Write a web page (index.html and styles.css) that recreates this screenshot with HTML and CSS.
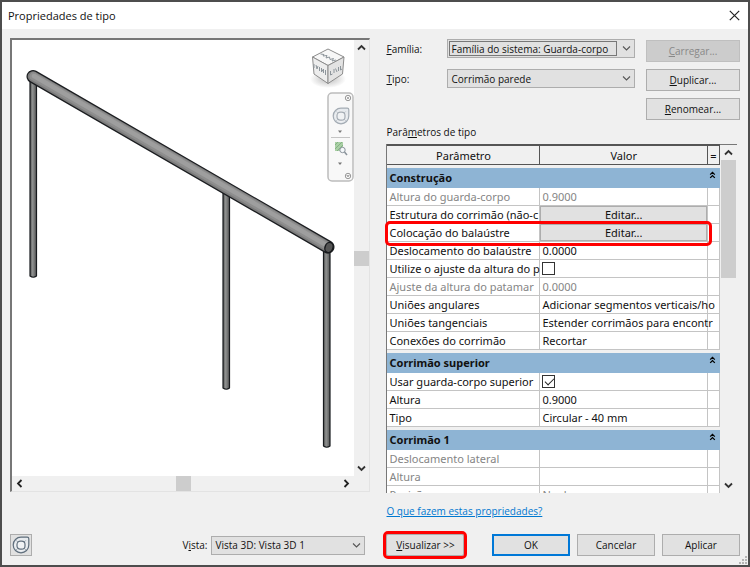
FILE: index.html
```html
<!DOCTYPE html>
<html lang="pt-BR">
<head>
    <meta charset="UTF-8">
    <meta name="viewport" content="width=device-width, initial-scale=1.0">
    <title>Propriedades de tipo</title>
    <link rel="stylesheet" href="styles.css">
</head>
<body>
    <!-- Shared icons -->
    <svg class="defs" width="0" height="0" aria-hidden="true">
        <symbol id="up" viewBox="0 0 9 9"><path d="M1 6.5 4.5 3 8 6.5" fill="none" stroke="#333" stroke-width="1.8"/></symbol>
        <symbol id="down" viewBox="0 0 9 9"><path d="M1 2.5 4.5 6 8 2.5" fill="none" stroke="#333" stroke-width="1.8"/></symbol>
        <symbol id="left" viewBox="0 0 9 9"><path d="M6.5 1 3 4.5 6.5 8" fill="none" stroke="#222" stroke-width="1.8"/></symbol>
        <symbol id="right" viewBox="0 0 9 9"><path d="M2.5 1 6 4.5 2.5 8" fill="none" stroke="#222" stroke-width="1.8"/></symbol>
        <symbol id="caret" viewBox="0 0 9 9"><path d="M1 2.5 4.5 6 8 2.5" fill="none" stroke="#555" stroke-width="1.1"/></symbol>
        <symbol id="collapse" viewBox="0 0 7 8"><path d="M1.2 3.6 3.5 1.3 5.8 3.6M1.2 6.9 3.5 4.6 5.8 6.9" fill="none" stroke="#000" stroke-width="1.3"/></symbol>
        <symbol id="wheel" viewBox="0 0 18 18">
            <path d="M9 1.2H15.2Q16.8 1.2 16.8 2.8V9A7.8 7.8 0 1 1 9 1.2Z" fill="#e6eaee" stroke="currentColor" stroke-width="1.2"/>
            <circle cx="9" cy="9.200" r="5.600" fill="#f2f3f4"/>
            <rect x="5" y="5.200" width="8" height="8" rx="3.200" fill="#f0f2f4" stroke="currentColor" stroke-width="1.2"/>
            <path d="M4.200 14 5.800 12.400M13.800 14 12.200 12.400M4.200 4.400 5.800 6M13.800 4.400 12.200 6" stroke="currentColor" stroke-width=".6"/>
        </symbol>
    </svg>

    <div class="dialog">
        <header class="titlebar">
            <h1>Propriedades de tipo</h1>
            <button class="close" aria-label="Fechar">
                <svg width="11" height="11" viewBox="0 0 11 11"><path d="M.8.8 10.2 10.2M10.2.8.8 10.2" stroke="#222" stroke-width="1.2"/></svg>
            </button>
        </header>

        <main class="content">
            <!-- 3D preview -->
            <section class="preview">
                <div class="canvas">
                    <svg class="model" viewBox="12 40 343 436" preserveAspectRatio="xMinYMin slice">
                        <defs>
                            <linearGradient id="post">
                                <stop offset="0" stop-color="#555"/>
                                <stop offset=".4" stop-color="#909291"/>
                                <stop offset="1" stop-color="#555"/>
                            </linearGradient>
                            <radialGradient id="shadow">
                                <stop offset="0" stop-color="#bbb"/>
                                <stop offset="1" stop-color="#fff"/>
                            </radialGradient>
                        </defs>
                        <g fill="url(#post)" stroke="#171a1d" stroke-width="1.2">
                            <path d="M30 80V276Q33.300 278.500 36.500 276V80Z"/>
                            <path d="M223 190V388Q226.300 390.500 229.500 388V190Z"/>
                            <path d="M323.500 248V446Q326.800 448.500 330 446V248Z"/>
                        </g>
                        <g stroke-linecap="round">
                            <path d="M33 76.500 328 247" stroke="#1b1d20" stroke-width="13"/>
                            <path d="M33 76.500 328 247" stroke="#7b7b7b" stroke-width="10.600"/>
                            <path d="M33.500 76.300 328 246.500" stroke="#8e8e8e" stroke-width="8"/>
                            <path d="M34 76 327 245.500" stroke="#9e9e9e" stroke-width="4.500"/>
                        </g>
                        <ellipse cx="329" cy="247.500" rx="4" ry="5.200" transform="rotate(20 329 247.500)" fill="#555" stroke="#17191c" stroke-width="1.500"/>
                        <!-- View cube -->
                        <ellipse cx="328" cy="79" rx="18" ry="9" fill="url(#shadow)"/>
                        <g stroke="#8c8c8c" stroke-width="1" stroke-linejoin="round">
                            <path d="M328 49 344 57 328 65.500 312.500 57Z" fill="#f7f7f7"/>
                            <path d="M312.500 57 328 65.500V83.500L314 74Z" fill="#ededed"/>
                            <path d="M344 57 328 65.500V83.500L342.500 74Z" fill="#e3e3e3"/>
                        </g>
                        <g fill="none" stroke="#8d959b" stroke-width="1">
                            <path d="M320.500 54 324 54.500 323 56 327 55.500 326 58 329.500 57 330 59.500 333.500 58.500 332 61 336 60"/>
                            <path d="M314 64V68M316 65 317 69 318 66M319.500 67V71M321.500 68V72L323.500 69V73M325.500 70V75"/>
                            <path d="M330.500 71V75L332.500 74M334 69V73M335.500 68.500 337 72M338.500 67V71M340.500 66V70L342 69"/>
                        </g>
                    </svg>
                    <div class="navbar">
                        <svg width="27" height="90" viewBox="0 0 27 90">
                            <rect x="1" y="1" width="25" height="88" rx="4" fill="#f8f8f8" stroke="#bcbcbc" stroke-width="1.500"/>
                            <g fill="none" stroke="#999">
                                <circle cx="21" cy="6" r="2.700"/><path d="M19.800 4.800 22.200 7.200M22.200 4.800 19.800 7.200" stroke-width=".8"/>
                                <circle cx="21" cy="84" r="2.700"/><path d="M19.800 83.500H22.200L21 85Z" stroke-width=".8"/>
                                <path d="M4 45.500H23" stroke="#c4c4c4"/>
                            </g>
                            <svg x="5" y="15" width="18" height="18" color="#a3abb3"><use href="#wheel"/></svg>
                            <path d="M11 38.500H15L13 41Z" fill="#777"/>
                            <path d="M11 70.500H15L13 73Z" fill="#777"/>
                            <rect x="8" y="50" width="8" height="9" fill="#a9cfa5"/>
                            <path d="M8 53 11 50M8 57 15 50M10 59 16 53" stroke="#7bab78" stroke-width=".8"/>
                            <circle cx="15.500" cy="58" r="2.700" fill="#f5f8fa" stroke="#8b949c"/>
                            <path d="M17.500 60 20 63" stroke="#8b949c" stroke-width="1.500"/>
                        </svg>
                    </div>
                </div>
                <div class="scroll scroll-v">
                    <button aria-label="Acima"><svg><use href="#up"/></svg></button>
                    <div class="track"><span class="thumb"></span></div>
                    <button aria-label="Abaixo"><svg><use href="#down"/></svg></button>
                </div>
                <div class="scroll scroll-h">
                    <button aria-label="Esquerda"><svg><use href="#left"/></svg></button>
                    <div class="track"><span class="thumb"></span></div>
                    <button aria-label="Direita"><svg><use href="#right"/></svg></button>
                </div>
            </section>

            <section class="properties">
                <div class="head">
                    <div class="fields">
                        <label for="familia"><u>F</u>amília:</label>
                        <span class="select focused">
                            <select id="familia"><option>Família do sistema: Guarda-corpo</option></select>
                            <svg><use href="#caret"/></svg>
                        </span>
                        <label for="tipo"><u>T</u>ipo:</label>
                        <span class="select">
                            <select id="tipo"><option>Corrimão parede</option></select>
                            <svg><use href="#caret"/></svg>
                        </span>
                    </div>
                    <div class="actions">
                        <button class="btn" disabled><u>C</u>arregar...</button>
                        <button class="btn"><u>D</u>uplicar...</button>
                        <button class="btn"><u>R</u>enomear...</button>
                    </div>
                </div>

                <h2>Parâ<u>m</u>etros de tipo</h2>

                <div class="grid">
                    <div class="grid-view">
                        <table>
                            <colgroup><col class="col-name"><col><col class="col-eq"></colgroup>
                            <thead>
                                <tr><th>Parâmetro</th><th>Valor</th><th>=</th></tr>
                            </thead>
                            <tbody>
                                <tr class="group"><th colspan="3"><div>Construção<svg><use href="#collapse"/></svg></div></th></tr>
                                <tr class="off"><td>Altura do guarda-corpo</td><td>0.9000</td><td></td></tr>
                                <tr><td>Estrutura do corrimão (não-c</td><td class="cell-btn"><button class="edit">Editar...</button></td><td></td></tr>
                                <tr class="marked"><td>Colocação do balaústre</td><td class="cell-btn"><button class="edit">Editar...</button></td><td></td></tr>
                                <tr><td>Deslocamento do balaústre</td><td>0.0000</td><td></td></tr>
                                <tr><td><label for="ajuste">Utilize o ajuste da altura do p</label></td><td><input type="checkbox" id="ajuste"></td><td></td></tr>
                                <tr class="off"><td>Ajuste da altura do patamar</td><td>0.0000</td><td></td></tr>
                                <tr><td>Uniões angulares</td><td>Adicionar segmentos verticais/ho</td><td></td></tr>
                                <tr><td>Uniões tangenciais</td><td>Estender corrimãos para encontr</td><td></td></tr>
                                <tr><td>Conexões do corrimão</td><td>Recortar</td><td></td></tr>
                                <tr class="group"><th colspan="3"><div>Corrimão superior<svg><use href="#collapse"/></svg></div></th></tr>
                                <tr><td><label for="superior">Usar guarda-corpo superior</label></td><td><input type="checkbox" id="superior" checked></td><td></td></tr>
                                <tr><td>Altura</td><td>0.9000</td><td></td></tr>
                                <tr><td>Tipo</td><td>Circular - 40 mm</td><td></td></tr>
                                <tr class="group"><th colspan="3"><div>Corrimão 1<svg><use href="#collapse"/></svg></div></th></tr>
                                <tr class="off"><td>Deslocamento lateral</td><td></td><td></td></tr>
                                <tr class="off"><td>Altura</td><td></td><td></td></tr>
                                <tr class="off"><td>Posição</td><td>Nenhum</td><td></td></tr>
                            </tbody>
                        </table>
                    </div>
                    <div class="scroll scroll-v grid-scroll">
                        <button aria-label="Acima"><svg><use href="#up"/></svg></button>
                        <div class="track"><span class="thumb"></span></div>
                        <button aria-label="Abaixo"><svg><use href="#down"/></svg></button>
                    </div>
                </div>

                <a class="help" href="#">O que fazem estas propriedades?</a>
            </section>
        </main>

        <footer class="footer">
            <div class="view">
                <button class="btn wheel-btn" aria-label="Roda de navegação"><svg><use href="#wheel"/></svg></button>
                <label for="vista">V<u>i</u>sta:</label>
                <span class="select">
                    <select id="vista"><option>Vista 3D: Vista 3D 1</option></select>
                    <svg><use href="#caret"/></svg>
                </span>
            </div>
            <div class="buttons">
                <button class="btn preview-btn"><u>V</u>isualizar &gt;&gt;</button>
                <button class="btn default">OK</button>
                <button class="btn">Cancelar</button>
                <button class="btn">Aplicar</button>
            </div>
        </footer>
        <svg class="grip" width="9" height="9" viewBox="0 0 9 9"><path d="M6 0h2v2H6zM3 3h2v2H3zM6 3h2v2H6zM0 6h2v2H0zM3 6h2v2H3zM6 6h2v2H6z" fill="#b5b5b5"/></svg>
    </div>
</body>
</html>
```
FILE: styles.css
```css
* {
    box-sizing: border-box;
}
body {
    margin: 0;
    font-family: "Open Sans", "Noto Sans", sans-serif;
    font-size: 10px;
    color: #111;
}
button, select, input {
    font: inherit;
    color: inherit;
    margin: 0;
}
.defs {
    position: absolute;
}
.dialog {
    position: relative;
    display: flex;
    flex-direction: column;
    height: 100vh;
    border: 2px solid #4d4d4d;
    background-color: #f0f0f0;
}

/* Title bar */
.titlebar {
    display: flex;
    align-items: center;
    justify-content: space-between;
    height: 27px;
    padding: 0 8px 0 6px;
    background-color: #fff;
}
.titlebar h1 {
    margin: 0;
    font-size: 11px;
    font-weight: normal;
}
.close {
    display: flex;
    padding: 0;
    border: 0;
    background: none;
}

.content {
    flex: 1;
    min-height: 0;
    display: grid;
    grid-template-columns: 361fr 354fr;
    gap: 16px;
    padding: 9px 8px 0;
}

/* Preview */
.preview {
    display: grid;
    grid-template-columns: 1fr 15px;
    grid-template-rows: 1fr 15px;
    margin-bottom: 27px;
    border: 1px solid #e3e3e3;
    border-top: 2px solid #777;
    border-left: 2px solid #777;
    min-height: 0;
}
.canvas {
    position: relative;
    min-height: 0;
    background-color: #fff;
    overflow: hidden;
}
.model {
    display: block;
    width: 100%;
    height: 100%;
}
.navbar {
    position: absolute;
    top: 52px;
    right: 0;
}
.navbar svg {
    display: block;
}

/* Scroll bars */
.scroll {
    display: flex;
    background-color: #f0f0f0;
}
.scroll-v {
    flex-direction: column;
}
.scroll button {
    display: flex;
    align-items: center;
    justify-content: center;
    width: 15px;
    height: 15px;
    padding: 0;
    border: 0;
    background: none;
}
.scroll svg {
    width: 9px;
    height: 9px;
}
.track {
    flex: 1;
    display: flex;
    align-items: center;
    justify-content: center;
}
.scroll-v .track {
    flex-direction: column;
}
.thumb {
    width: 15px;
    height: 15px;
    background-color: #cdcdcd;
}

/* Fields */
.properties {
    display: flex;
    flex-direction: column;
    min-width: 0;
    min-height: 0;
}
.head {
    display: flex;
    gap: 11px;
    padding-top: 1px;
}
.fields {
    flex: 1;
    display: grid;
    grid-template-columns: 50px 1fr;
    gap: 11px;
    align-items: center;
    align-content: start;
}
.actions {
    display: flex;
    flex-direction: column;
    gap: 7px;
    width: 94px;
    padding-top: 1px;
}
.btn {
    height: 22px;
    padding: 0;
    border: 1px solid #adadad;
    background-color: #e1e1e1;
}
.btn:disabled {
    border-color: #bfbfbf;
    background-color: #ccc;
    color: #888;
}
.select {
    position: relative;
    display: block;
}
.select select {
    display: block;
    width: 100%;
    height: 19px;
    padding: 0 20px 0 3px;
    border: 1px solid #adadad;
    border-radius: 0;
    background-color: #e1e1e1;
    appearance: none;
}
.select svg {
    position: absolute;
    top: 5px;
    right: 4px;
    width: 9px;
    height: 9px;
    pointer-events: none;
}
.focused::after {
    content: "";
    position: absolute;
    inset: 2px 18px 2px 2px;
    border: 1px solid #777;
    pointer-events: none;
}
.properties h2 {
    margin: 4px 0;
    font-size: 10px;
    font-weight: normal;
    line-height: 16px;
}

/* Parameter grid */
.grid {
    flex: 1;
    display: flex;
    min-height: 0;
    margin: 0 3px 0 -2px;
}
.grid-view {
    flex: 1;
    min-width: 0;
    padding-left: 2px;
    overflow: hidden;
}
table {
    width: 100%;
    table-layout: fixed;
    border-collapse: separate;
    border-spacing: 0;
    border-left: 1px solid #777;
    background-color: #fff;
    font-family: "Noto Sans", sans-serif;
    font-size: 11px;
    line-height: 17px;
}
.col-name {
    width: 153px;
}
.col-eq {
    width: 12px;
}
th, td {
    height: 18px;
    padding: 0 0 0 2px;
    white-space: nowrap;
    text-align: left;
}
td {
    border-right: 1px solid #c4c4c4;
    border-bottom: 1px solid #c4c4c4;
}
thead th {
    height: 21px;
    padding: 0;
    border: solid #555;
    border-width: 2px 1px 1px 0;
    background-color: #f0f0f0;
    font-weight: normal;
    text-align: center;
}
.group th {
    height: 23px;
    padding: 3px 0 0;
    background-color: #f0f0f0;
}
.group div {
    display: flex;
    justify-content: space-between;
    height: 20px;
    padding: 0 4px 0 2px;
    background-color: #8eb4d4;
    line-height: 20px;
}
.group svg {
    width: 7px;
    height: 8px;
    margin-top: 3px;
}
.off td {
    color: #858585;
}
td.cell-btn {
    padding: 0;
}
.edit {
    display: block;
    width: 100%;
    height: 17px;
    padding: 0;
    border: 1px solid #adadad;
    background-color: #e1e1e1;
    line-height: 15px;
}
.marked {
    position: relative;
}
.marked td:first-child::after {
    content: "";
    position: absolute;
    inset: -3px 8px -4px -2px;
    border: 3px solid #f00;
    border-radius: 5px;
    pointer-events: none;
}
input[type="checkbox"] {
    display: block;
    width: 13px;
    height: 13px;
    border: 1px solid #333;
    background-color: #fff;
    appearance: none;
}
input[type="checkbox"]:checked::before {
    content: "";
    display: block;
    width: 8px;
    height: 4px;
    margin: 2px 0 0 2px;
    border: solid #222;
    border-width: 0 0 1px 1px;
    transform: rotate(-45deg);
}
.grid-scroll {
    width: 17px;
    padding: 0 1px;
    border-top: 1px solid #777;
}
.grid-scroll .track {
    justify-content: flex-start;
}
.grid-scroll .thumb {
    height: 37%;
}
.help {
    align-self: flex-start;
    margin: 11px 0 1px;
    color: #0078d0;
    line-height: 14px;
}

/* Footer */
.footer {
    display: grid;
    grid-template-columns: 361fr 354fr;
    gap: 16px;
    padding: 15px 8px 9px;
}
.view {
    display: flex;
    align-items: center;
    gap: 4px;
    padding-right: 5px;
}
.view .select {
    width: 154px;
}
.wheel-btn {
    width: 22px;
    margin-right: auto;
    color: #5f6e7c;
}
.wheel-btn svg {
    display: block;
    width: 18px;
    height: 18px;
    margin: auto;
}
.buttons {
    display: flex;
    gap: 7px;
}
.buttons .btn {
    width: 78px;
}
.buttons .preview-btn {
    margin-right: auto;
    outline: 3px solid #f00;
    outline-offset: 0;
    border-radius: 2px;
}
.buttons .default {
    border: 2px solid #0078d7;
}
.grip {
    position: absolute;
    right: 0;
    bottom: 0;
}
```
